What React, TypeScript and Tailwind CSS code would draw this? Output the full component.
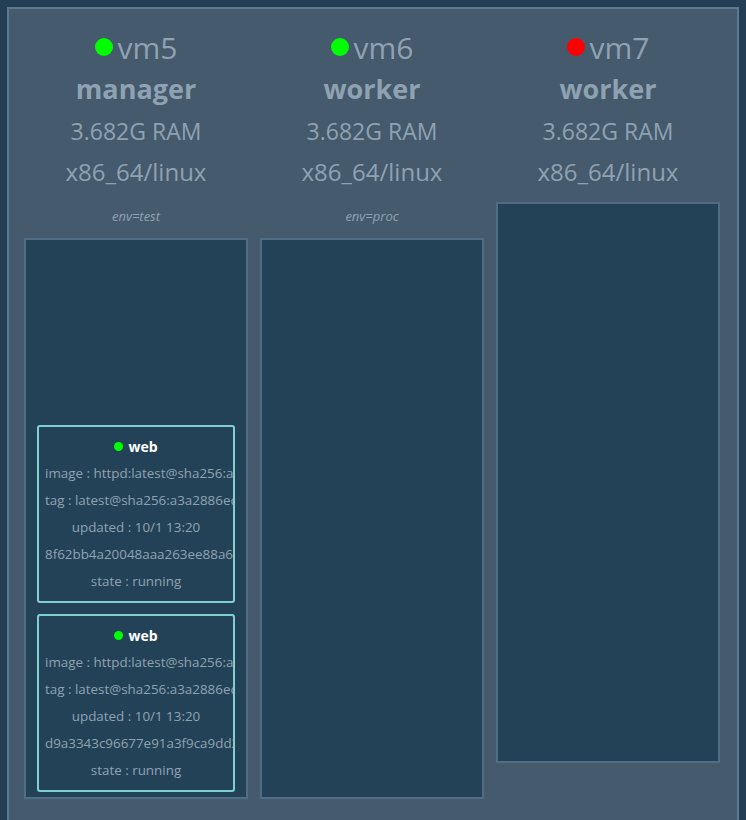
import clsx from 'clsx';

type Task = { id: string; image: string; tag: string; updated: string; state: string };
type Node = { name: string; up: boolean; role: string; ram: string; platform: string; label?: string; tasks: Task[] };

const task = (id: string): Task => ({
  id,
  image: 'httpd:latest@sha256:a3a2886ec250194804974932eaf4a4ba2b77c4e7d551ddb63b01068bf70f4120',
  tag: 'latest@sha256:a3a2886ec250194804974932eaf4a4ba2b77c4e7d551ddb63b01068bf70f4120',
  updated: '10/1 13:20',
  state: 'running',
});

const nodes: Node[] = [
  { name: 'vm5', up: true, role: 'manager', ram: '3.682G RAM', platform: 'x86_64/linux', label: 'env=test', tasks: [task('8f62bb4a20048aaa263ee88a6b1c'), task('d9a3343c96677e91a3f9ca9dd2e1')] },
  { name: 'vm6', up: true, role: 'worker', ram: '3.682G RAM', platform: 'x86_64/linux', label: 'env=proc', tasks: [] },
  { name: 'vm7', up: false, role: 'worker', ram: '3.682G RAM', platform: 'x86_64/linux', tasks: [] },
];

const TaskCard = ({ t }: { t: Task }) => (
  <div className="border-2 border-[#7fd1cf] rounded-[3px] px-[6px] py-[6px] text-[13.4px] leading-[27px] text-[#8fa2b2] text-center overflow-hidden whitespace-nowrap">
    <div className="flex items-center justify-center gap-[5px] text-white font-bold text-[14px]">
      <span className="w-[9px] h-[9px] rounded-full bg-[#00ff00]" />
      web
    </div>
    <div>image : {t.image}</div>
    <div>tag : {t.tag}</div>
    <div>updated : {t.updated}</div>
    <div>{t.id}</div>
    <div>state : {t.state}</div>
  </div>
);

const NodeColumn = ({ node }: { node: Node }) => (
  <div className="w-[236px] px-[6px] flex flex-col text-[#8fa2b2] text-center">
    <div className="h-[42px] flex items-center justify-center text-[30px]">
      <span className={clsx('w-[18px] h-[18px] rounded-full mr-[5px]', node.up ? 'bg-[#00ff00]' : 'bg-[#ff0000]')} />
      {node.name}
    </div>
    <div className="h-[42px] flex items-center justify-center text-[27px] font-bold">{node.role}</div>
    <div className="h-[42px] flex items-center justify-center text-[23px]">{node.ram}</div>
    <div className="h-[40px] flex items-center justify-center text-[24px]">{node.platform}</div>
    {node.label && <div className="h-[46px] pt-[4px] flex items-center justify-center text-[13px] italic">{node.label}</div>}
    <div
      className={clsx(
        'h-[561px] border-2 border-[#4f6d85] bg-[#244257] px-[11px] pb-[5px] flex flex-col justify-end gap-[11px]',
        !node.label && 'mt-[10px]'
      )}
    >
      {node.tasks.map(t => (
        <TaskCard key={t.id} t={t} />
      ))}
    </div>
  </div>
);

export default function App() {
  return (
    <div className="min-h-screen bg-[#243f55] pt-[7px] px-[7px]" style={{ fontFamily: '"Open Sans", "Noto Sans", sans-serif' }}>
      <div className="border-2 border-[#5b7990] bg-[#455a6d] pl-[9px] pt-[17px] pb-[40px] flex">
        {nodes.map(n => (
          <NodeColumn key={n.name} node={n} />
        ))}
      </div>
    </div>
  );
}
